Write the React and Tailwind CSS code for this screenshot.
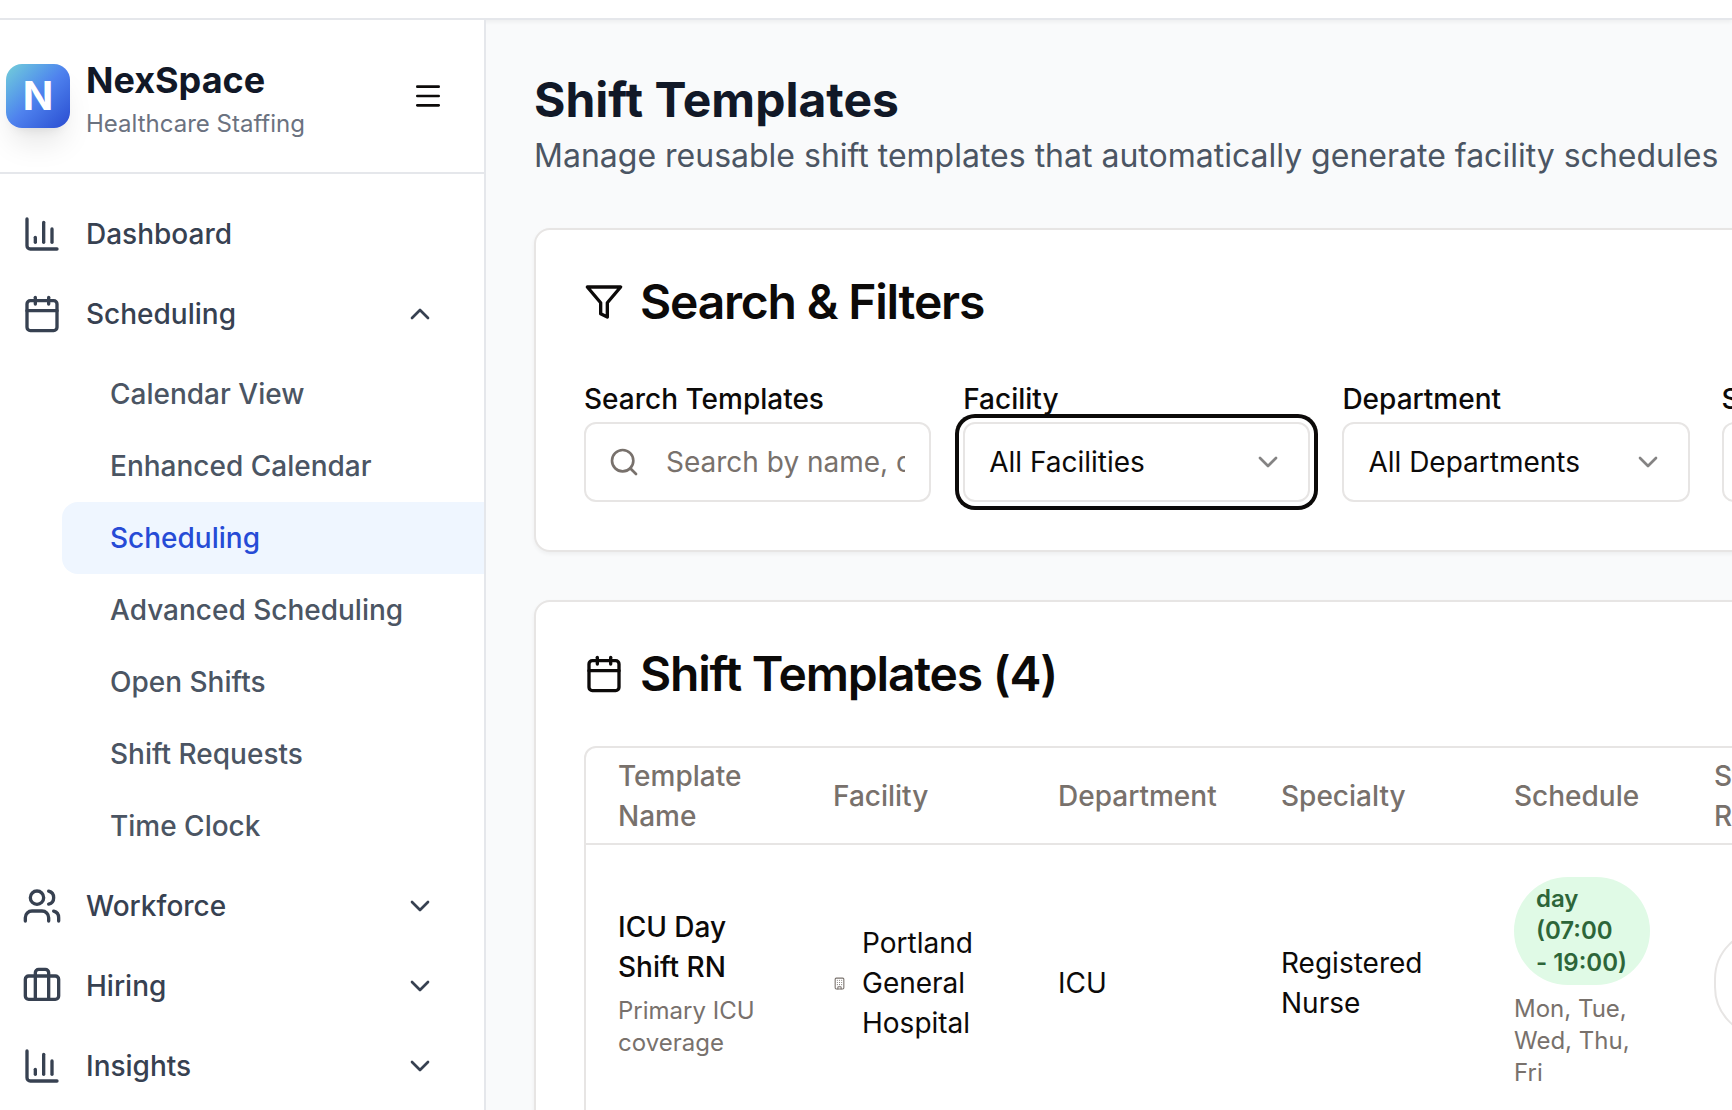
import { Menu, ChartColumn, Calendar, Users, Briefcase, ChevronDown, ChevronUp, Search, Building } from "lucide-react";

const subItems = [
  "Calendar View",
  "Enhanced Calendar",
  "Scheduling",
  "Advanced Scheduling",
  "Open Shifts",
  "Shift Requests",
  "Time Clock",
];

function NavButton({ icon: Icon, label, open, expandable = true }) {
  const Chevron = open ? ChevronUp : ChevronDown;
  return (
    <button
      type="button"
      aria-expanded={expandable ? Boolean(open) : undefined}
      className="flex h-[72px] w-full items-center gap-6 pr-6 pl-[22px] text-left font-medium text-[#374151]"
    >
      <Icon className="size-10 shrink-0" />
      <span className="flex-1">{label}</span>
      {expandable && <Chevron className="size-8" />}
    </button>
  );
}

function Sidebar() {
  return (
    <aside className="w-[486px] shrink-0 overflow-hidden border-r-2 border-[#e5e7eb] bg-white">
      <div className="flex items-center gap-4 border-b-2 border-[#e5e7eb] py-8 pr-8 pl-1.5">
        <div className="flex size-16 items-center justify-center rounded-2xl bg-linear-to-br from-[#75cfd8] via-[#4f82ee] to-[#2b4bd0] text-[40px] font-bold text-white shadow-[0_20px_30px_-6px_rgba(0,0,0,0.1),0_8px_12px_-8px_rgba(0,0,0,0.1)]">
          N
        </div>
        <div className="flex-1">
          <div className="text-4xl leading-14 font-bold text-[#111827]">NexSpace</div>
          <div className="text-2xl leading-8 text-[#6b7280]">Healthcare Staffing</div>
        </div>
        <button type="button" aria-label="Toggle menu" className="p-2 text-[#0c0a09]">
          <Menu className="size-8" />
        </button>
      </div>
      <nav className="flex flex-col gap-2 py-6 pr-6">
        <NavButton icon={ChartColumn} label="Dashboard" expandable={false} />
        <NavButton icon={Calendar} label="Scheduling" open />
        <div className="-mr-6 ml-[62px] flex flex-col">
          {subItems.map((item) => (
            <a
              key={item}
              href="#"
              className={
                item === "Scheduling"
                  ? "flex h-[72px] items-center rounded-l-2xl bg-[#eff6ff] pl-12 font-medium text-[#264bd6]"
                  : "flex h-[72px] items-center rounded-l-2xl pl-12 font-medium text-[#4b5563]"
              }
            >
              {item}
            </a>
          ))}
        </div>
        <NavButton icon={Users} label="Workforce" />
        <NavButton icon={Briefcase} label="Hiring" />
        <NavButton icon={ChartColumn} label="Insights" />
      </nav>
    </aside>
  );
}

function FilterIcon() {
  return (
    <svg
      viewBox="0 0 24 24"
      fill="none"
      stroke="currentColor"
      strokeWidth="2"
      strokeLinecap="round"
      strokeLinejoin="round"
      className="size-10"
      aria-hidden="true"
    >
      <polygon points="22 3 2 3 10 12.46 10 19 14 21 14 12.46 22 3" />
    </svg>
  );
}

function Card({ icon, title, children }) {
  return (
    <section className="rounded-2xl border-2 border-[#e7e5e4] bg-white p-12 shadow-[0_2px_4px_rgba(0,0,0,0.05)]">
      <h2 className="mb-12 flex h-12 items-center gap-4 text-5xl leading-none font-semibold tracking-tight">
        {icon}
        {title}
      </h2>
      {children}
    </section>
  );
}

function SelectField({ id, label, value, focused }) {
  return (
    <div>
      <label htmlFor={id} className="block h-12 leading-[50px] font-medium">
        {label}
      </label>
      <div className="relative">
        <select
          id={id}
          className={
            focused
              ? "h-20 w-full appearance-none rounded-xl border-2 border-[#e7e5e4] bg-white pr-14 pl-6 ring-4 ring-[#0c0a09] ring-offset-4 ring-offset-white outline-none"
              : "h-20 w-full appearance-none rounded-xl border-2 border-[#e7e5e4] bg-white pr-14 pl-6 outline-none"
          }
        >
          <option>{value}</option>
        </select>
        <ChevronDown className="pointer-events-none absolute top-6 right-6.5 size-8 opacity-50" />
      </div>
    </div>
  );
}

function Filters() {
  return (
    <Card icon={<FilterIcon />} title="Search & Filters">
      <div className="grid grid-cols-5 gap-8">
        <div>
          <label htmlFor="search" className="block h-12 leading-[50px] font-medium">
            Search Templates
          </label>
          <div className="relative">
            <Search className="absolute top-6 left-6 size-8 text-[#78716c]" />
            <input
              id="search"
              type="text"
              placeholder="Search by name, department..."
              className="h-20 w-full rounded-xl border-2 border-[#e7e5e4] bg-white pr-6 pl-20 outline-none placeholder:text-[#78716c]"
            />
          </div>
        </div>
        <SelectField id="facility" label="Facility" value="All Facilities" focused />
        <SelectField id="department" label="Department" value="All Departments" />
        <SelectField id="specialty" label="Specialty" value="All Specialties" />
        <SelectField id="status" label="Status" value="All Statuses" />
      </div>
    </Card>
  );
}

const columns = ["Template Name", "Facility", "Department", "Specialty", "Schedule", "Staff Ratio", "Status", "Actions"];

function Templates() {
  return (
    <Card icon={<Calendar className="size-10" />} title="Shift Templates (4)">
      <div className="overflow-hidden rounded-xl border-2 border-[#e7e5e4]">
        <table className="w-full table-fixed border-collapse text-left">
          <colgroup>
            <col className="w-[215px]" />
            <col className="w-[225px]" />
            <col className="w-[223px]" />
            <col className="w-[233px]" />
            <col className="w-[200px]" />
            <col className="w-[164px]" />
            <col />
            <col />
          </colgroup>
          <thead>
            <tr className="border-b-2 border-[#e7e5e4]">
              {columns.map((c) => (
                <th key={c} scope="col" className="h-24 px-8 font-medium text-[#78716c]">
                  {c}
                </th>
              ))}
            </tr>
          </thead>
          <tbody>
            <tr className="border-b-2 border-[#e7e5e4]">
              <td className="p-8">
                <div className="font-medium">ICU Day Shift RN</div>
                <div className="mt-2 text-2xl leading-8 text-[#78716c]">Primary ICU coverage</div>
              </td>
              <td className="p-8">
                <div className="flex items-center gap-4">
                  <Building className="size-[13px] shrink-0 text-[#78716c]" />
                  Portland General Hospital
                </div>
              </td>
              <td className="p-8">ICU</td>
              <td className="p-8">Registered Nurse</td>
              <td className="p-8">
                <div className="rounded-full border-2 border-transparent bg-[#e0fae6] px-5 py-1 text-2xl leading-8 font-semibold text-[#2d6539]">
                  day (07:00 - 19:00)
                </div>
                <div className="mt-2 text-2xl leading-8 text-[#78716c]">Mon, Tue, Wed, Thu, Fri</div>
              </td>
              <td className="p-8">
                <div className="rounded-full border-2 border-[#e7e5e4] px-5 py-1 text-2xl leading-8 font-semibold">
                  2 to 4 staff
                </div>
              </td>
              <td className="p-8">Active</td>
              <td className="p-8">
                <button type="button">Edit</button>
              </td>
            </tr>
          </tbody>
        </table>
      </div>
    </Card>
  );
}

export default function App() {
  return (
    <div className="flex h-screen flex-col overflow-hidden bg-[#f9fafb] font-['Inter',sans-serif] text-[28px] leading-10 text-[#0c0a09]">
      <header className="h-5 shrink-0 border-b-2 border-[#e5e7eb] bg-white shadow-[0_2px_4px_rgba(0,0,0,0.05)]" />
      <div className="flex min-h-0 flex-1">
        <Sidebar />
        <main className="min-w-0 flex-1 overflow-hidden p-12">
          <div className="flex min-w-[1964px] flex-col gap-12">
            <div>
              <h1 className="text-5xl leading-16 font-bold text-[#111827]">Shift Templates</h1>
              <p className="text-[32px] leading-12 text-[#4b5563]">
                Manage reusable shift templates that automatically generate facility schedules
              </p>
            </div>
            <Filters />
            <Templates />
          </div>
        </main>
      </div>
    </div>
  );
}
